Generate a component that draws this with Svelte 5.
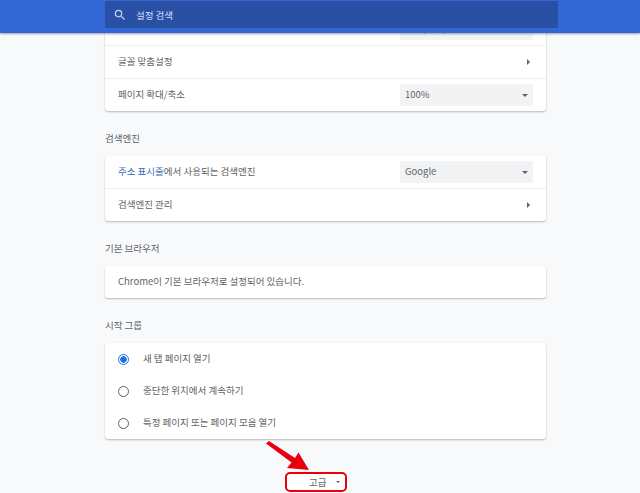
<script>
  const startOptions = [
    { label: '새 탭 페이지 열기', checked: true },
    { label: '중단한 위치에서 계속하기', checked: false },
    { label: '특정 페이지 또는 페이지 모음 열기', checked: false }
  ];
</script>

<div class="page">
  <header class="toolbar">
    <div class="search">
      <svg class="search-icon" viewBox="0 0 24 24" width="14" height="14">
        <path fill="#c6d4f2" d="M15.5 14h-.79l-.28-.27A6.47 6.47 0 0 0 16 9.5 6.5 6.5 0 1 0 9.5 16c1.61 0 3.09-.59 4.23-1.57l.27.28v.79l5 4.99L20.49 19l-4.99-5zm-6 0C7.01 14 5 11.99 5 9.5S7.01 5 9.5 5 14 7.01 14 9.5 11.99 14 9.5 14z"/>
      </svg>
      <span>설정 검색</span>
    </div>
  </header>

  <main class="content">
    <section class="card">
      <div class="row">
        <span>글꼴 크기</span>
        <div class="select"><span>보통(권장)</span><i class="caret"></i></div>
      </div>
      <div class="row line">
        <span>글꼴 맞춤설정</span>
        <i class="arrow-right"></i>
      </div>
      <div class="row line">
        <span>페이지 확대/축소</span>
        <div class="select"><span>100%</span><i class="caret"></i></div>
      </div>
    </section>

    <h2>검색엔진</h2>
    <section class="card">
      <div class="row">
        <span><span class="link">주소 표시줄</span>에서 사용되는 검색엔진</span>
        <div class="select"><span>Google</span><i class="caret"></i></div>
      </div>
      <div class="row line">
        <span>검색엔진 관리</span>
        <i class="arrow-right"></i>
      </div>
    </section>

    <h2>기본 브라우저</h2>
    <section class="card">
      <div class="row"><span>Chrome이 기본 브라우저로 설정되어 있습니다.</span></div>
    </section>

    <h2>시작 그룹</h2>
    <section class="card">
      {#each startOptions as opt}
        <div class="row radio-row">
          <span class="radio" class:checked={opt.checked}></span>
          <span>{opt.label}</span>
        </div>
      {/each}
    </section>

    <div class="advanced">
      <button class="advanced-btn">
        <span>고급</span>
        <i class="caret small"></i>
      </button>
    </div>
  </main>

  <svg class="pointer" viewBox="0 0 50 36" width="50" height="36">
    <path fill="#e8000f" d="M1 2.5 L4 0 L30 17 L33.5 11.5 L44 29 L22 27 L26.5 21.5 Z"/>
  </svg>
</div>

<style>
  :global(body) {
    margin: 0;
    background: #f8f9fa;
  }

  .page {
    position: relative;
    width: 640px;
    height: 493px;
    overflow: hidden;
    background: #f8f9fa;
    font-family: "Noto Sans CJK KR", "Liberation Sans", sans-serif;
    font-size: 9.5px;
    color: #5f6368;
  }

  .toolbar {
    position: absolute;
    top: 0;
    left: 0;
    right: 0;
    height: 33px;
    background: #3367d6;
    box-shadow: 0 1px 2px rgba(60, 64, 67, 0.5);
    z-index: 2;
  }

  .search {
    display: flex;
    align-items: center;
    box-sizing: border-box;
    margin: 1px 0 0 105px;
    width: 453px;
    height: 27px;
    padding-left: 8px;
    gap: 9px;
    background: #2a50a5;
    border-radius: 1px;
    color: #d3def5;
  }

  .content {
    box-sizing: border-box;
    width: 441px;
    margin-left: 105px;
    padding-top: 13px;
  }

  .card {
    background: #fff;
    border-radius: 3px;
    box-shadow: 0 1px 2px rgba(60, 64, 67, 0.35);
  }

  .row {
    display: flex;
    align-items: center;
    justify-content: space-between;
    box-sizing: border-box;
    height: 32px;
    padding: 0 13px;
    line-height: 1;
  }

  .line {
    height: 33px;
    border-top: 1px solid #eceef0;
  }

  .link {
    color: #3f6bb5;
  }

  .select {
    display: flex;
    align-items: center;
    justify-content: space-between;
    box-sizing: border-box;
    width: 133px;
    height: 22px;
    padding: 0 5px;
    background: #f1f3f4;
    border-radius: 2px;
  }

  .caret {
    width: 0;
    height: 0;
    border-left: 3.5px solid transparent;
    border-right: 3.5px solid transparent;
    border-top: 3.5px solid #5f6368;
  }

  .caret.small {
    border-left-width: 2.5px;
    border-right-width: 2.5px;
    border-top-width: 2.5px;
  }

  .arrow-right {
    width: 0;
    height: 0;
    margin-right: 3px;
    border-top: 3px solid transparent;
    border-bottom: 3px solid transparent;
    border-left: 3px solid #5f6368;
  }

  h2 {
    margin: 0;
    height: 45px;
    box-sizing: border-box;
    padding-top: 20px;
    font-size: 9.5px;
    font-weight: 400;
    line-height: 14px;
    color: #5f6368;
  }

  .radio-row {
    justify-content: flex-start;
    gap: 14px;
  }

  .radio {
    box-sizing: border-box;
    width: 11px;
    height: 11px;
    border: 1.5px solid #5f6368;
    border-radius: 50%;
    margin-left: 0;
    flex: none;
  }

  .radio.checked {
    border-color: #1a73e8;
    background: radial-gradient(circle, #1a73e8 0 3px, #fff 3.5px);
  }

  .advanced {
    display: flex;
    justify-content: center;
    padding-top: 33px;
    padding-right: 20px;
  }

  .advanced-btn {
    display: flex;
    align-items: center;
    justify-content: flex-end;
    gap: 9px;
    box-sizing: border-box;
    width: 62px;
    height: 20px;
    padding: 0 5px 0 0;
    background: #fff;
    border: 2px solid #e8000f;
    border-radius: 5px;
    font: inherit;
    color: #5f6368;
  }

  .pointer {
    position: absolute;
    left: 265px;
    top: 441px;
  }
</style>
